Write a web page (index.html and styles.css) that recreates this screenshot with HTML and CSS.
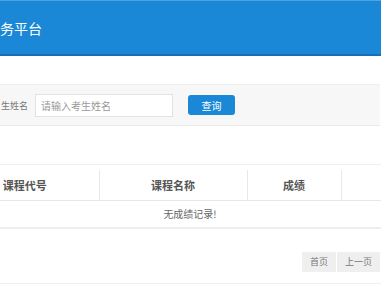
FILE: index.html
```html
<!DOCTYPE html>
<html lang="zh-CN">
<head>
    <meta charset="UTF-8">
    <meta name="viewport" content="width=device-width, initial-scale=1.0">
    <title>成绩查询</title>
    <link rel="stylesheet" href="styles.css">
</head>
<body>

    <!-- Header -->
    <div class="top-bar">
        <span class="site-title">务平台</span>
    </div>

    <!-- Search -->
    <div class="search-bar">
        <label class="search-label" for="stuName">生姓名</label>
        <input type="text" id="stuName" class="search-input" placeholder="请输入考生姓名">
        <button class="search-btn">查询</button>
    </div>

    <!-- Results -->
    <div class="result-panel">
        <table class="score-table">
            <thead>
                <tr>
                    <th class="col-code">课程代号</th>
                    <th class="col-name">课程名称</th>
                    <th class="col-score">成绩</th>
                    <th class="col-extra"></th>
                </tr>
            </thead>
            <tbody>
                <tr>
                    <td colspan="4" class="empty-row">无成绩记录!</td>
                </tr>
            </tbody>
        </table>

        <div class="pager">
            <a class="page-btn">首页</a>
            <a class="page-btn">上一页</a>
            <a class="page-btn active"></a>
        </div>
    </div>

</body>
</html>
```

FILE: styles.css
```css
* {
    margin: 0;
    padding: 0;
    box-sizing: border-box;
}

body {
    font-family: "Noto Sans CJK SC", "Liberation Sans", sans-serif;
    background-color: #fff;
    color: #555;
    overflow: hidden;
    width: 381px;
    height: 286px;
}

.top-bar {
    height: 56px;
    background-color: #1a88d6;
    border-top: 1px solid #4ea4e0;
    border-bottom: 2px solid #1b6fb1;
    white-space: nowrap;
}

.site-title {
    display: inline-block;
    line-height: 54px;
    font-size: 14px;
    color: #fff;
}

.search-bar {
    display: flex;
    align-items: center;
    height: 42px;
    margin: 28px 1px 0 -30px;
    padding-left: 31px;
    background-color: #f7f7f7;
    border-top: 1px solid #f0f0f0;
    border-bottom: 1px solid #ebebeb;
    white-space: nowrap;
}

.search-label {
    font-size: 9px;
    color: #777;
}

.search-input {
    width: 138px;
    height: 23px;
    margin-left: 7px;
    padding: 0 5px;
    border: 1px solid #e3e3e3;
    background-color: #fff;
    font-family: inherit;
    font-size: 10px;
    outline: none;
}

.search-input::placeholder {
    color: #999;
}

.search-btn {
    width: 47px;
    height: 20px;
    margin-left: 15px;
    border: none;
    border-radius: 3px;
    background-color: #1a88d6;
    color: #fff;
    font-family: inherit;
    font-size: 10px;
}

.result-panel {
    width: 478px;
    margin: 38px 0 0 -49px;
    border-top: 1px solid #eee;
    padding-top: 5px;
}

.score-table {
    width: 478px;
    border-collapse: collapse;
    table-layout: fixed;
}

.score-table th {
    height: 30px;
    font-size: 11px;
    font-weight: bold;
    color: #555;
    border-right: 1px solid #e8e8e8;
    border-bottom: 1px solid #e8e8e8;
}

.score-table th:last-child {
    border-right: none;
}

.col-code { width: 148px; }
.col-name { width: 148px; }
.col-score { width: 94px; }

.empty-row {
    height: 28px;
    text-align: center;
    font-size: 10px;
    color: #666;
    border-bottom: 2px solid #eee;
}

.pager {
    display: flex;
    gap: 1px;
    padding: 23px 0 11px 351px;
    border-bottom: 1px solid #eee;
    white-space: nowrap;
}

.page-btn {
    display: inline-block;
    height: 20px;
    line-height: 20px;
    padding: 0 8px;
    background-color: #efefef;
    color: #777;
    font-size: 9px;
    text-align: center;
}

.page-btn.active {
    width: 20px;
    margin-left: 2px;
    background-color: #1a88d6;
}
```
